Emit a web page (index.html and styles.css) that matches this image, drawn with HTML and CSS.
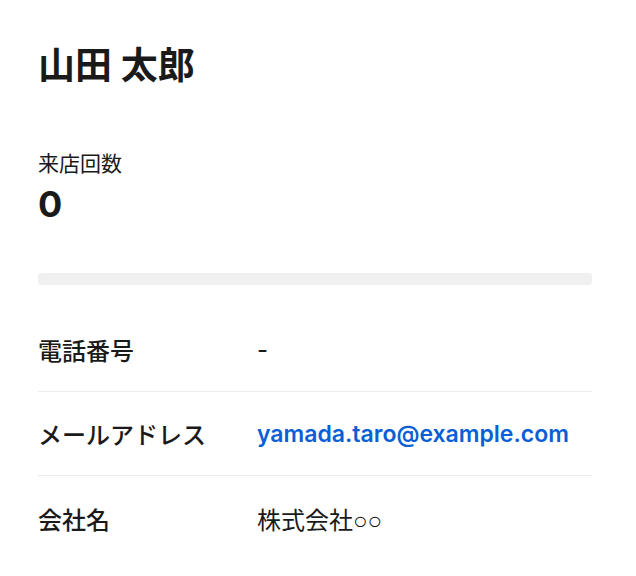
FILE: index.html
```html
<!DOCTYPE html>
<html lang="ja">
<head>
<meta charset="utf-8">
<title>顧客詳細</title>
<link rel="stylesheet" href="styles.css">
</head>
<body>
<main class="page">
  <h1 class="name">山田 太郎</h1>
  <section class="stat">
    <div class="stat-label">来店回数</div>
    <div class="stat-value">0</div>
  </section>
  <div class="bar"></div>
  <dl class="info">
    <div class="row">
      <dt class="label">電話番号</dt>
      <dd class="value">-</dd>
    </div>
    <div class="row">
      <dt class="label">メールアドレス</dt>
      <dd class="value"><a class="link" href="#">yamada.taro@example.com</a></dd>
    </div>
    <div class="row">
      <dt class="label">会社名</dt>
      <dd class="value">株式会社<span class="mark">○○</span></dd>
    </div>
  </dl>
</main>
</body>
</html>
```
FILE: styles.css
```css
* { box-sizing: border-box; }
html, body { margin: 0; padding: 0; background: #fff; }
body {
  font-family: Inter, "Noto Sans CJK JP", sans-serif;
  color: #1a1a1a;
}
.page {
  padding: 40px 44px 0 38px;
}
.name {
  margin: 0;
  font-size: 37px;
  font-weight: 700;
  line-height: 52px;
}
.stat {
  margin-top: 58px;
}
.stat-label {
  font-size: 21px;
  line-height: 28px;
}
.stat-value {
  font-size: 36px;
  font-weight: 700;
  line-height: 44px;
  margin-top: 4px;
}
.bar {
  margin-top: 47px;
  height: 12px;
  border-radius: 3px;
  background: #f0f0f0;
}
.info {
  margin: 23px 0 0;
}
.row {
  display: flex;
  align-items: center;
  height: 84px;
  border-bottom: 1px solid #ececec;
}
.row:last-child { border-bottom: none; }
.label {
  width: 219px;
  flex: none;
  font-size: 24px;
  font-weight: 500;
}
.value {
  margin: 0;
  font-size: 24px;
}
.link {
  color: #0a5fd6;
  font-weight: 600;
  font-size: 23px;
  text-decoration: none;
}
.mark {
  font-family: "Liberation Sans", sans-serif;
}
```
